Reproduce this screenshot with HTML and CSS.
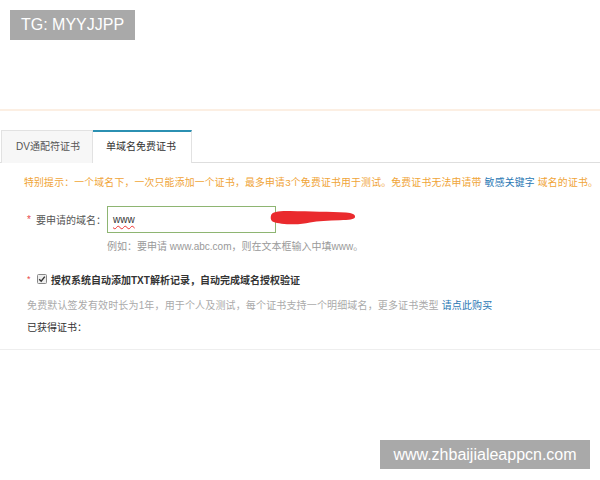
FILE: index.html
```html
<!DOCTYPE html>
<html lang="zh-CN">
<head>
<meta charset="utf-8">
<link rel="stylesheet" href="styles.css">
</head>
<body>
<div class="page">
  <div class="topline"></div>
  <div class="tabs">
    <div class="tab tab-dv">DV通配符证书</div>
    <div class="tab tab-single active">单域名免费证书</div>
  </div>
  <div class="content">
    <p class="warn">特别提示：一个域名下，一次只能添加一个证书，最多申请3个免费证书用于测试。免费证书无法申请带 <span class="link">敏感关键字</span> 域名的证书。</p>
    <div class="form-row">
      <span class="star">*</span>
      <span class="label">要申请的域名：</span>
      <div class="input"><span class="typed">www</span></div>
      <svg class="scribble" width="86" height="16" viewBox="0 0 86 16"><path d="M1 5.5 C2 1.5 9 0.8 20 1 C40 1.4 60 1.8 76 2.6 C82 3 85.5 4.4 85 7 C84.5 9.6 79 10 70 10.2 C58 10.6 48 11 40 12.4 C34 13.6 28 14.6 20 14.2 C12 13.8 5 13 2.5 11.4 C0.5 10 0.5 7.5 1 5.5 Z" fill="#ea2a2d"/></svg>
    </div>
    <p class="hint">例如：要申请 www.abc.com，则在文本框输入中填www。</p>
    <div class="check-row">
      <span class="star small">*</span>
      <svg class="checkbox" width="10" height="10" viewBox="0 0 10 10"><rect x="0.5" y="0.5" width="9" height="9" rx="1" fill="#eee" stroke="#888"/><path d="M2.2 5.2 L4.2 7.2 L7.8 2.6" fill="none" stroke="#333" stroke-width="1.4"/></svg>
      <span class="check-label">授权系统自动添加TXT解析记录，自动完成域名授权验证</span>
    </div>
    <p class="note">免费默认签发有效时长为1年，用于个人及测试，每个证书支持一个明细域名，更多证书类型 <span class="link">请点此购买</span></p>
    <p class="obtained">已获得证书：</p>
  </div>
  <div class="divider"></div>
</div>
<div class="wm wm-top">TG: MYYJJPP</div>
<div class="wm wm-bottom">www.zhbaijialeappcn.com</div>
</body>
</html>
```

FILE: styles.css
```css
html, body {
  margin: 0;
  padding: 0;
  background: #fff;
}
body {
  width: 600px;
  height: 480px;
  overflow: hidden;
  position: relative;
  font-family: "Liberation Sans", "Noto Sans CJK SC", sans-serif;
  font-size: 10px;
  color: #333;
}
.page {
  padding-top: 109px;
}
.topline {
  height: 2px;
  background: #fcefe3;
}
.tabs {
  margin-top: 19px;
  display: flex;
  height: 32px;
  padding-left: 1px;
  border-bottom: 1px solid #dedede;
}
.tab {
  box-sizing: border-box;
  height: 33px;
  line-height: 31px;
  font-size: 10px;
  color: #555;
  border: 1px solid #e2e2e2;
  border-bottom: none;
  background: #f7f7f7;
  padding-left: 14px;
}
.tab-dv {
  width: 92px;
}
.tab-single {
  width: 99px;
  padding-left: 13px;
  border-left: none;
}
.tab.active {
  background: #fff;
  color: #333;
  border-top: 2px solid #2b90b2;
  line-height: 30px;
  position: relative;
  z-index: 1;
}
.content {
  padding-left: 27px;
}
.warn {
  margin: 13px 0 0 -3px;
  line-height: 14px;
  font-size: 9.85px;
  letter-spacing: 0.2px;
  color: #f0a437;
  white-space: nowrap;
}
.link {
  color: #2a78b4;
}
.form-row {
  margin-top: 16px;
  display: flex;
  align-items: center;
  height: 27px;
  position: relative;
}
.star {
  color: #e8484b;
  width: 9px;
  font-size: 10px;
}
.star.small {
  width: 10px;
  font-size: 9px;
}
.label {
  width: 71px;
  color: #555;
}
.input {
  box-sizing: border-box;
  width: 169px;
  height: 27px;
  border: 1px solid #8eb572;
  padding-left: 5px;
  display: flex;
  align-items: center;
}
.typed {
  color: #333;
  font-size: 10px;
  text-decoration: underline wavy #e33;
  text-underline-offset: 2px;
}
.scribble {
  position: absolute;
  left: 243px;
  top: 4px;
}
.hint {
  margin: 7px 0 0 80px;
  line-height: 14px;
  color: #999;
}
.check-row {
  margin-top: 18px;
  display: flex;
  align-items: center;
  height: 14px;
}
.checkbox {
  margin-right: 4px;
}
.check-label {
  font-weight: bold;
  color: #333;
}
.note {
  margin: 13px 0 0;
  line-height: 14px;
  letter-spacing: 0.15px;
  color: #aaa;
}
.obtained {
  margin: 8px 0 0;
  line-height: 14px;
  color: #333;
}
.divider {
  margin-top: 14px;
  height: 1px;
  background: #eee;
}
.wm {
  position: absolute;
  background: #a9a9a9;
  color: #fff;
  font-family: "Liberation Sans", sans-serif;
  font-size: 16px;
  text-align: center;
  box-sizing: border-box;
}
.wm-top {
  left: 10px;
  top: 10px;
  width: 125px;
  height: 30px;
  line-height: 30px;
}
.wm-bottom {
  left: 380px;
  top: 440px;
  width: 210px;
  height: 29px;
  line-height: 29px;
}
```
